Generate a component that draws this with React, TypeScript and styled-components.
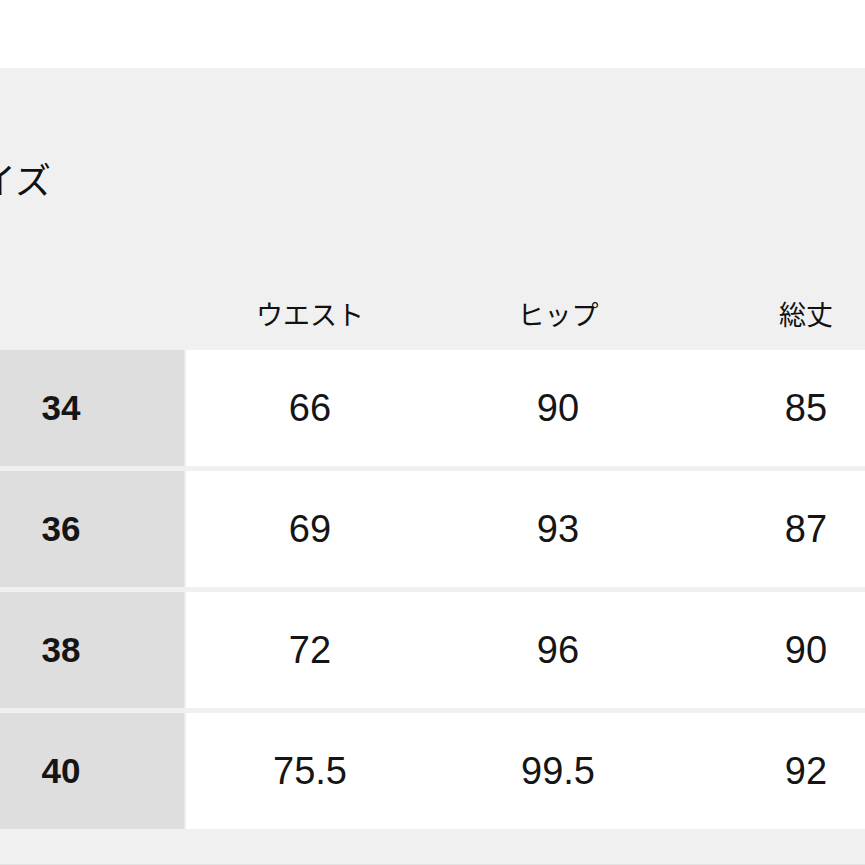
import React from "react";
import styled, { createGlobalStyle } from "styled-components";

const Global = createGlobalStyle`
  html, body { margin: 0; padding: 0; background: #ffffff; overflow: hidden; }
  body { font-family: "Liberation Sans", "Noto Sans CJK JP", sans-serif; color: #111111; }
`;

const Page = styled.div`
  width: 865px;
  height: 865px;
  padding-top: 68px;
  box-sizing: border-box;
  overflow: hidden;
`;

const Panel = styled.section`
  background: #f0f0f0;
  margin-left: -62px;
  width: 1000px;
  height: 797px;
  padding-top: 92px;
  box-sizing: border-box;
  border-bottom: 1px solid #e2e2e2;
`;

const Title = styled.h2`
  margin: 0 0 0 6px;
  font-family: "Noto Sans CJK JP", sans-serif;
  font-weight: 400;
  font-size: 36px;
  line-height: 36px;
  color: #111;
`;

const Table = styled.div`
  display: grid;
  grid-template-columns: repeat(4, 248px);
  row-gap: 5px;
  margin-top: 104px;
`;

const HeadCell = styled.div`
  font-family: "Noto Sans CJK JP", sans-serif;
  font-size: 27px;
  line-height: 27px;
  text-align: center;
  height: 27px;
  margin-bottom: 18px;
  color: #111;
`;

const LabelCell = styled.div`
  background: #dedede;
  height: 116px;
  display: flex;
  align-items: center;
  justify-content: center;
  font-weight: 700;
  font-size: 35px;
  color: #151515;
  border-right: 2px solid #ececec;
  box-sizing: border-box;
`;

const ValueCell = styled.div`
  background: #ffffff;
  height: 116px;
  display: flex;
  align-items: center;
  justify-content: center;
  font-size: 38px;
  color: #151515;
`;

const rows = [
  ["34", "66", "90", "85"],
  ["36", "69", "93", "87"],
  ["38", "72", "96", "90"],
  ["40", "75.5", "99.5", "92"],
];

export default function App() {
  return (
    <>
      <Global />
      <Page>
        <Panel>
          <Title>サイズ</Title>
          <Table>
            <HeadCell />
            <HeadCell>ウエスト</HeadCell>
            <HeadCell>ヒップ</HeadCell>
            <HeadCell>総丈</HeadCell>
            {rows.map((r) => (
              <React.Fragment key={r[0]}>
                <LabelCell>{r[0]}</LabelCell>
                <ValueCell>{r[1]}</ValueCell>
                <ValueCell>{r[2]}</ValueCell>
                <ValueCell>{r[3]}</ValueCell>
              </React.Fragment>
            ))}
          </Table>
        </Panel>
      </Page>
    </>
  );
}
